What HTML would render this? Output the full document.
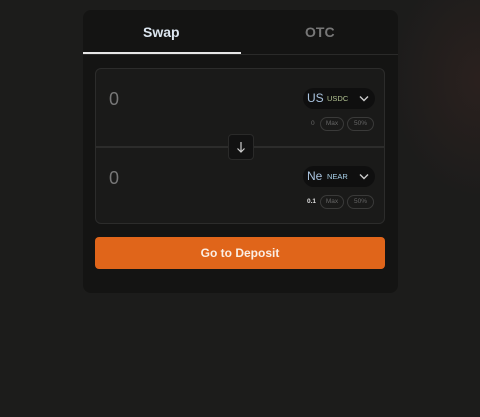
<!DOCTYPE html>
<html><head><style>
*{margin:0;padding:0;box-sizing:border-box}
body{width:480px;height:417px;background:#1c1c1b;font-family:"Liberation Sans",sans-serif;position:relative;overflow:hidden}
.glow{position:absolute;left:390px;top:-40px;width:180px;height:240px;background:radial-gradient(ellipse at center,rgba(60,38,34,.45),rgba(28,28,27,0) 70%)}
.card{position:absolute;left:83px;top:10px;width:315px;height:283px;background:#141413;border-radius:8px}
.tab{position:absolute;top:14px;font-weight:bold;font-size:14px}
.line{position:absolute;left:0;top:44px;width:315px;height:1px;background:#2a2a29}
.ul{position:absolute;left:0;top:42px;width:158px;height:2px;background:#e6e6e6}
.box{position:absolute;left:12px;top:58px;width:290px;height:156px;border:1px solid #2c2c2b;border-radius:6px;background:#1a1a19}
.div{position:absolute;left:0;top:77px;width:288px;height:2px;background:#2c2c2b}
.zero{position:absolute;left:13px;font-size:18px;color:#777}
.pill{position:absolute;left:207px;width:72px;height:21px;background:#0f0f0f;border-radius:11px;color:#ccc}
.pill .a{position:absolute;left:4px;top:3px;font-size:12px;color:#aac4e0}
.pill .b{position:absolute;left:24px;top:6px;font-size:7.5px}
.pill svg{position:absolute;left:56px;top:7px}
.bd{position:absolute;height:14px;border:1px solid #3a3a39;border-radius:7px;font-size:6.5px;color:#666;text-align:center;line-height:12px}
.arr{position:absolute;left:132px;top:65px;width:26px;height:26px;background:#121212;border:1px solid #2a2a29;border-radius:4px}
.btn{position:absolute;left:12px;top:227px;width:290px;height:32px;background:#e0651a;border-radius:4px;color:#fbeee4;font-weight:bold;font-size:12px;text-align:center;line-height:32px}
</style></head><body>
<div class="glow"></div>
<div class="card">
<div class="tab" style="left:60px;color:#dce6f0">Swap</div>
<div class="tab" style="left:222px;color:#777">OTC</div>
<div class="line"></div><div class="ul"></div>
<div class="box">
<div class="zero" style="top:20px">0</div>
<div class="pill" style="top:19px"><span class="a">US</span><span class="b" style="color:#b0c090">USDC</span><svg width="10" height="7"><path d="M1 1.5L5 5.5L9 1.5" stroke="#ccc" stroke-width="1.4" fill="none"/></svg></div>
<div style="position:absolute;left:215px;top:51px;font-size:6.5px;color:#666">0</div>
<div class="bd" style="left:224px;top:48px;width:24px">Max</div>
<div class="bd" style="left:251px;top:48px;width:27px">50%</div>
<div class="div"></div>
<div class="arr"><svg width="24" height="24"><path d="M12 7V17M8.5 13.5L12 17L15.5 13.5" stroke="#ccc" stroke-width="1.2" fill="none"/></svg></div>
<div class="zero" style="top:99px">0</div>
<div class="pill" style="top:97px"><span class="a">Ne</span><span class="b" style="color:#a8d0e8">NEAR</span><svg width="10" height="7"><path d="M1 1.5L5 5.5L9 1.5" stroke="#ccc" stroke-width="1.4" fill="none"/></svg></div>
<div style="position:absolute;left:211px;top:129px;font-size:6.5px;color:#ddd;font-weight:bold">0.1</div>
<div class="bd" style="left:224px;top:126px;width:24px">Max</div>
<div class="bd" style="left:251px;top:126px;width:27px">50%</div>
</div>
<div class="btn">Go to Deposit</div>
</div>
</body></html>
